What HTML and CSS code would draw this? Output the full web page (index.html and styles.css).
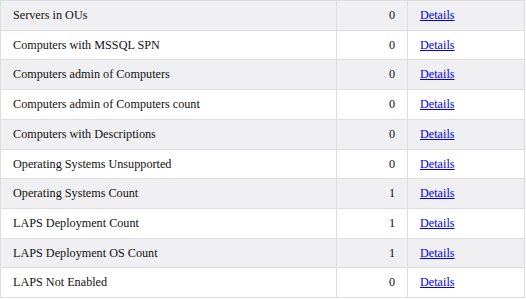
FILE: index.html
```html
<!DOCTYPE html>
<html>
<head>
<meta charset="utf-8">
<link rel="stylesheet" href="styles.css">
</head>
<body>
<table class="report">
  <tbody>
    <tr><td class="name">Servers in OUs</td><td class="num">0</td><td class="link"><a href="#">Details</a></td></tr>
    <tr><td class="name">Computers with MSSQL SPN</td><td class="num">0</td><td class="link"><a href="#">Details</a></td></tr>
    <tr><td class="name">Computers admin of Computers</td><td class="num">0</td><td class="link"><a href="#">Details</a></td></tr>
    <tr><td class="name">Computers admin of Computers count</td><td class="num">0</td><td class="link"><a href="#">Details</a></td></tr>
    <tr><td class="name">Computers with Descriptions</td><td class="num">0</td><td class="link"><a href="#">Details</a></td></tr>
    <tr><td class="name">Operating Systems Unsupported</td><td class="num">0</td><td class="link"><a href="#">Details</a></td></tr>
    <tr><td class="name">Operating Systems Count</td><td class="num">1</td><td class="link"><a href="#">Details</a></td></tr>
    <tr><td class="name">LAPS Deployment Count</td><td class="num">1</td><td class="link"><a href="#">Details</a></td></tr>
    <tr><td class="name">LAPS Deployment OS Count</td><td class="num">1</td><td class="link"><a href="#">Details</a></td></tr>
    <tr><td class="name">LAPS Not Enabled</td><td class="num">0</td><td class="link"><a href="#">Details</a></td></tr>
  </tbody>
</table>
</body>
</html>
```
FILE: styles.css
```css
html, body {
  margin: 0;
  padding: 0;
  background: #ffffff;
}
table.report {
  border-collapse: collapse;
  width: 525px;
  font-family: "Liberation Serif", "Times New Roman", serif;
  font-size: 12.2px;
  color: #111111;
}
table.report td {
  border: 1px solid #dddddd;
  padding: 7px 12px;
  line-height: 14.7px;
  vertical-align: middle;
}
table.report tr:nth-child(odd) td {
  background: #f0f0f2;
}
table.report td.name {
  width: 311px;
}
table.report td.num {
  width: 46px;
  text-align: right;
  padding-right: 12px;
}
table.report td.link a {
  color: #0000ee;
  text-decoration: underline;
}
```
